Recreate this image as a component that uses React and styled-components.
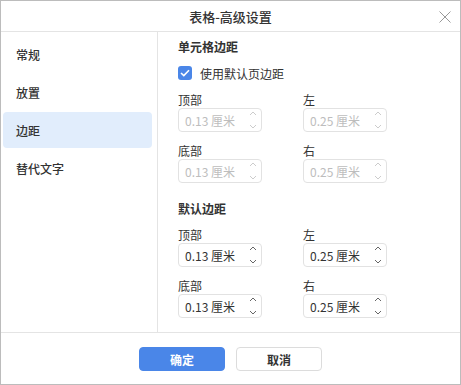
import React, { useState } from "react";
import styled, { createGlobalStyle } from "styled-components";

const GlobalStyle = createGlobalStyle`
  html, body {
    margin: 0;
    padding: 0;
    background: #ffffff;
  }
  * {
    box-sizing: border-box;
  }
`;

const blue = "#4a86e8";
const textColor = "#333333";

const Dialog = styled.div`
  width: 461px;
  height: 385px;
  border: 1px solid #bcbcbc;
  background: #fff;
  display: flex;
  flex-direction: column;
  font-family: "Noto Sans CJK SC", "Noto Sans", sans-serif;
  color: ${textColor};
`;

const Header = styled.div`
  height: 31px;
  border-bottom: 1px solid #e4e4e4;
  display: flex;
  align-items: center;
  justify-content: center;
  position: relative;
`;

const Title = styled.div`
  font-size: 13px;
  font-weight: 500;
  line-height: 18px;
  margin-top: 1px;
`;

const CloseButton = styled.button`
  position: absolute;
  right: 8px;
  top: 8px;
  width: 15px;
  height: 15px;
  padding: 0;
  border: none;
  background: none;
  display: flex;
  align-items: center;
  justify-content: center;
`;

const Body = styled.div`
  height: 300px;
  display: flex;
`;

const Sidebar = styled.div`
  width: 157px;
  border-right: 1px solid #e4e4e4;
  padding: 4px 5px 0 2px;
  display: flex;
  flex-direction: column;
  gap: 2px;
`;

const NavItem = styled.div`
  height: 36px;
  border-radius: 4px;
  padding-left: 13px;
  display: flex;
  align-items: center;
  font-size: 12px;
  font-weight: 500;
  background: ${(p) => (p.$active ? "#e1edfc" : "transparent")};
`;

const Content = styled.div`
  flex: 1;
  padding: 6px 20px 0 20px;
`;

const SectionTitle = styled.div`
  font-size: 12px;
  font-weight: 700;
  line-height: 18px;
  margin-top: ${(p) => p.$top || 0}px;
`;

const CheckRow = styled.label`
  display: flex;
  align-items: center;
  height: 20px;
  margin-top: 7px;
  font-size: 12px;
  gap: 8px;
`;

const CheckBox = styled.span`
  width: 14px;
  height: 14px;
  border-radius: 3px;
  background: ${blue};
  display: flex;
  align-items: center;
  justify-content: center;
`;

const Grid = styled.div`
  display: grid;
  grid-template-columns: 84px 84px;
  column-gap: 41px;
  row-gap: 11px;
  margin-top: 9px;
`;

const Field = styled.div`
  display: flex;
  flex-direction: column;
`;

const Label = styled.div`
  font-size: 12px;
  line-height: 16px;
  height: 16px;
`;

const InputBox = styled.div`
  height: 24px;
  border: 1px solid #e2e2e2;
  border-radius: 4px;
  display: flex;
  align-items: center;
  padding-left: 6px;
  font-size: 12px;
  color: ${(p) => (p.$disabled ? "#bdbdbd" : textColor)};
  position: relative;
`;

const Spinner = styled.div`
  position: absolute;
  right: 3px;
  top: 2px;
  bottom: 2px;
  width: 10px;
  display: flex;
  flex-direction: column;
  justify-content: space-between;
  align-items: center;
`;

const Footer = styled.div`
  flex: 1;
  border-top: 1px solid #e4e4e4;
  display: flex;
  align-items: center;
  justify-content: center;
  gap: 11px;
  padding-top: 1px;
`;

const Button = styled.button`
  width: 86px;
  height: 24px;
  border-radius: 4px;
  font-family: "Noto Sans CJK SC", "Noto Sans", sans-serif;
  font-size: 12px;
  font-weight: 700;
  padding: 0;
  border: 1px solid ${(p) => (p.$primary ? blue : "#dcdcdc")};
  background: ${(p) => (p.$primary ? blue : "#fff")};
  color: ${(p) => (p.$primary ? "#fff" : textColor)};
`;

const Chevron = ({ up, color }) => (
  <svg width="8" height="5" viewBox="0 0 8 5">
    <path
      d={up ? "M1 4 L4 1 L7 4" : "M1 1 L4 4 L7 1"}
      fill="none"
      stroke={color}
      strokeWidth="1"
    />
  </svg>
);

const NumberInput = ({ value, disabled }) => {
  const c = disabled ? "#cccccc" : "#666666";
  return (
    <InputBox $disabled={disabled}>
      {value} 厘米
      <Spinner>
        <Chevron up color={c} />
        <Chevron color={c} />
      </Spinner>
    </InputBox>
  );
};

const MarginGrid = ({ disabled }) => (
  <Grid>
    <Field>
      <Label>顶部</Label>
      <NumberInput value="0.13" disabled={disabled} />
    </Field>
    <Field>
      <Label>左</Label>
      <NumberInput value="0.25" disabled={disabled} />
    </Field>
    <Field>
      <Label>底部</Label>
      <NumberInput value="0.13" disabled={disabled} />
    </Field>
    <Field>
      <Label>右</Label>
      <NumberInput value="0.25" disabled={disabled} />
    </Field>
  </Grid>
);

const navItems = ["常规", "放置", "边距", "替代文字"];

export default function App() {
  const [active, setActive] = useState(2);
  return (
    <>
      <GlobalStyle />
      <Dialog>
        <Header>
          <Title>表格-高级设置</Title>
          <CloseButton aria-label="关闭">
            <svg width="12" height="12" viewBox="0 0 12 12">
              <path d="M0.5 0.5 L11.5 11.5 M11.5 0.5 L0.5 11.5" stroke="#999" strokeWidth="1" />
            </svg>
          </CloseButton>
        </Header>
        <Body>
          <Sidebar>
            {navItems.map((n, i) => (
              <NavItem key={n} $active={i === active} onClick={() => setActive(i)}>
                {n}
              </NavItem>
            ))}
          </Sidebar>
          <Content>
            <SectionTitle>单元格边距</SectionTitle>
            <CheckRow>
              <CheckBox>
                <svg width="10" height="8" viewBox="0 0 10 8">
                  <path d="M1 4 L3.8 6.6 L9 1.2" fill="none" stroke="#fff" strokeWidth="1.6" />
                </svg>
              </CheckBox>
              使用默认页边距
            </CheckRow>
            <MarginGrid disabled />
            <SectionTitle $top={17}>默认边距</SectionTitle>
            <MarginGrid />
          </Content>
        </Body>
        <Footer>
          <Button $primary>确定</Button>
          <Button>取消</Button>
        </Footer>
      </Dialog>
    </>
  );
}
